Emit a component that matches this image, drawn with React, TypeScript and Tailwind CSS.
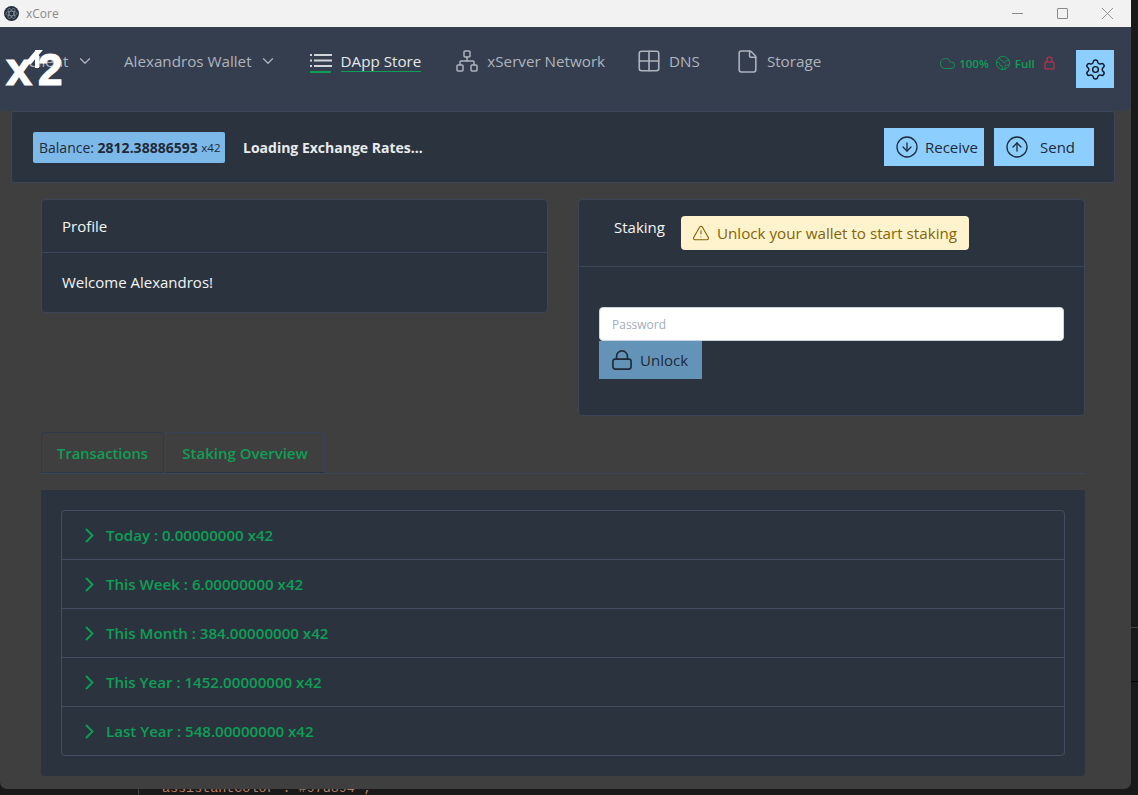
import React from "react";
import { ChevronDown, CircleArrowDown, CircleArrowUp, Cloud, Earth, File, Grid2x2, Network, Settings, TriangleAlert } from "lucide-react";

const rows = [
  "Today : 0.00000000 x42",
  "This Week : 6.00000000 x42",
  "This Month : 384.00000000 x42",
  "This Year : 1452.00000000 x42",
  "Last Year : 548.00000000 x42",
];

function AppIcon() {
  return (
    <svg width="15" height="15" viewBox="0 0 16 16" fill="none" stroke="#8fa0ad" strokeWidth="0.7">
      <circle cx="8" cy="8" r="8" fill="#27303a" stroke="none" />
      <ellipse cx="8" cy="8" rx="6" ry="2.4" />
      <ellipse cx="8" cy="8" rx="6" ry="2.4" transform="rotate(60 8 8)" />
      <ellipse cx="8" cy="8" rx="6" ry="2.4" transform="rotate(120 8 8)" />
    </svg>
  );
}

function ListIcon() {
  return (
    <svg width="24" height="22" viewBox="0 0 24 22" fill="none" strokeWidth="2">
      <path d="M5 3h18M5 8.500h18M5 14h18M1 3h2M1 8.500h2M1 14h2" stroke="#d1d5db" />
      <path d="M1 20h21" stroke="#0d9f55" />
    </svg>
  );
}

function PadLock({ size, color }: { size: number; color: string }) {
  return (
    <svg width={size} height={size} viewBox="0 0 22 22" fill="none" stroke={color} strokeWidth="1.800">
      <rect x="1" y="10" width="20" height="11" rx="2.500" />
      <path d="M5 10V7a6 6 0 0 1 12 0v3" />
    </svg>
  );
}

function WinControls() {
  return (
    <div className="flex items-center gap-[34px] pr-[18px]">
      <div className="h-px w-[11px] bg-[#8a8a8a]" />
      <div className="h-[11px] w-[11px] rounded-[1px] border border-[#8a8a8a]" />
      <svg width="11" height="11" viewBox="0 0 11 11" stroke="#8a8a8a" strokeWidth="0.9"><path d="M0 0l11 11M11 0L0 11" /></svg>
    </div>
  );
}

function NavItem({ icon, label, className, labelClass }: { icon?: React.ReactNode; label: string; className: string; labelClass?: string }) {
  return (
    <div className={"flex items-center " + className}>
      {icon}
      <span className={labelClass ?? "text-[#aeb4bd]"}>{label}</span>
    </div>
  );
}

function PrimaryButton({ icon, label }: { icon: React.ReactNode; label: string }) {
  return (
    <button className="flex h-[38px] w-[100px] items-center bg-[#8ccfff] text-[15px] text-[#1f2937]">
      {icon}
      <span>{label}</span>
    </button>
  );
}

function Logo() {
  return (
    <div className="absolute left-[6px] top-[20px] h-[40px] w-[58px] text-white [-webkit-text-stroke:1.200px_white]" style={{ fontFamily: '"Liberation Sans", sans-serif' }}>
      <div className="absolute left-[24px] top-[3px] h-[14px] w-[7px] skew-x-[-40deg] bg-white" />
      <div className="absolute left-[29px] top-[3px] h-[18px] w-[4px] bg-white" />
      <div className="flex items-baseline font-bold leading-[44px]">
        <span className="w-[32px] text-[47px]">x</span>
        <span className="text-[44px]">2</span>
      </div>
    </div>
  );
}

export default function App() {
  return (
    <div className="relative h-[795px] w-[1138px] overflow-hidden bg-[#191919]" style={{ fontFamily: '"Open Sans", "Noto Sans", sans-serif' }}>
      <div className="absolute left-[162px] top-[779px] font-mono text-[13.400px] text-[#b5816a]">assistantColor : #97d894 ;</div>
      <div className="absolute left-[138px] top-[788px] h-[7px] w-px bg-[#444]" />
      <div className="absolute right-0 top-[627px] h-px w-[7px] bg-[#444]" />
      <div className="absolute right-0 top-[681px] h-px w-[7px] bg-black" />

      <div className="relative h-[789px] w-[1131px] overflow-hidden rounded-b-[7px] bg-[#3f3f3f]">
        <div className="flex h-[27px] items-center justify-between bg-[#f2f2f2]">
          <div className="flex items-center gap-[7px] pl-[4px] text-[12px] text-[#8a8a8a]">
            <AppIcon />
            <span>xCore</span>
          </div>
          <WinControls />
        </div>

        <nav className="relative flex h-[84px] items-center rounded-br-[6px] bg-[#343e4e] pl-[28px] text-[15.200px]">
          <div className="mb-[16px] flex items-center">
            <NavItem label="Client" className="w-[48px]" />
            <ChevronDown className="mr-[30px] text-[#aeb4bd]" size={18} strokeWidth={1.7} />
            <NavItem label="Alexandros Wallet" className="" />
            <ChevronDown className="ml-[7px] text-[#aeb4bd]" size={18} strokeWidth={1.7} />
            <NavItem icon={<span className="mr-[8px] mt-[3px]"><ListIcon /></span>} label="DApp Store" className="ml-[32px]" labelClass="mt-[1px] border-b border-[#0d9f55] leading-[19px] text-[#e5e7eb]" />
            <NavItem icon={<Network className="mr-[8px]" size={24} strokeWidth={1.5} />} label="xServer Network" className="ml-[34px] text-[#aeb4bd]" />
            <NavItem icon={<Grid2x2 className="mr-[7px]" size={26} strokeWidth={1.5} />} label="DNS" className="ml-[31px] text-[#aeb4bd]" />
            <NavItem icon={<File className="mr-[7px]" size={25} strokeWidth={1.5} />} label="Storage" className="ml-[35px] text-[#aeb4bd]" />
          </div>
          <div className="mb-[12px] ml-[118px] flex items-center text-[11.500px] font-semibold text-[#0d9f55]">
            <Cloud size={17} strokeWidth={1.2} className="mr-[3px]" />
            <span className="pt-[2px]">100%</span>
            <Earth size={16} strokeWidth={1.2} className="ml-[6px] mr-[4px]" />
            <span className="pt-[2px]">Full</span>
            <svg width="13" height="14" viewBox="0 0 13 14" fill="none" stroke="#d12d45" strokeWidth="1.100" className="ml-[8px]">
              <rect x="2" y="6" width="9" height="7" rx="1" />
              <path d="M4 6V3.500a2.500 2.500 0 0 1 5 0V6" />
            </svg>
          </div>
          <button className="absolute left-[1076px] top-[23px] flex h-[38px] w-[38px] items-center justify-center bg-[#8ccfff] text-[#111827]">
            <Settings size={23} strokeWidth={1.5} />
          </button>
          <Logo />
        </nav>

        <section className="ml-[11px] flex h-[72px] w-[1104px] items-center rounded-[3px] border border-[#3b4759] bg-[#2b343e] pl-[21px] pr-[20px]">
          <div className="flex h-[31px] w-[192px] items-center rounded-[2px] bg-[#7cb9e8] pl-[6px] pt-[1px] text-[14px] text-[#1f2937]">
            Balance:&nbsp;<b>2812.38886593</b>&nbsp;<span className="text-[11.500px]">x42</span>
          </div>
          <div className="ml-[18px] pt-[1px] text-[14px] font-bold text-[#e8eaed]">Loading Exchange Rates...</div>
          <div className="ml-auto flex gap-[10px]">
            <PrimaryButton icon={<CircleArrowDown className="ml-[11px] mr-[6px]" size={24} strokeWidth={1.3} />} label="Receive" />
            <PrimaryButton icon={<CircleArrowUp className="ml-[11px] mr-[11px]" size={24} strokeWidth={1.3} />} label="Send" />
          </div>
        </section>

        <div className="ml-[41px] mt-[16px] flex h-[217px] w-[1044px] items-start gap-[30px]">
          <div className="h-[114px] w-[507px] rounded-[4px] border border-[#3b4759] bg-[#2b343e] text-[15px] text-[#f3f4f6]">
            <div className="flex h-[53px] items-center border-b border-[#3b4759] pl-[20px]">Profile</div>
            <div className="flex h-[59px] items-center pl-[20px]">Welcome Alexandros!</div>
          </div>
          <div className="h-[217px] w-[507px] rounded-[4px] border border-[#3b4759] bg-[#2b343e]">
            <div className="flex h-[67px] border-b border-[#3b4759] pl-[35px]">
              <span className="mt-[17px] text-[15px] leading-[20px] text-[#f3f4f6]">Staking</span>
              <div className="ml-[16px] mt-[16px] flex h-[34px] w-[288px] items-center rounded-[4px] bg-[#fff3cd] pl-[11px] text-[15.200px] text-[#856404]">
                <TriangleAlert size={18} strokeWidth={1.5} className="mr-[7px]" />
                Unlock your wallet to start staking
              </div>
            </div>
            <div className="pl-[20px] pt-[40px]">
              <input readOnly placeholder="Password" className="block h-[34px] w-[465px] rounded-[4px] border border-[#cbd5e0] bg-white pl-[12px] text-[12px] placeholder:text-[#a0aec0]" />
              <button className="flex h-[38px] w-[103px] items-center bg-[#6394b8] pl-[13px] text-[15px] text-[#1f2937]">
                <span className="mr-[8px]"><PadLock size={20} color="#1f2937" /></span>
                Unlock
              </button>
            </div>
          </div>
        </div>

        <div className="ml-[41px] mt-[16px] flex h-[42px] w-[1044px] items-end gap-px border-b border-[#3b4759] text-[15px] font-semibold text-[#0d9f55]">
          <div className="flex h-[41px] w-[123px] items-center justify-center rounded-t-[4px] border border-[#2f3a49] pt-[2px] text-[14.700px]">Transactions</div>
          <div className="flex h-[41px] w-[160px] items-center justify-center rounded-t-[4px] border border-[#36435a] border-b-[#2b343e] pt-[2px]">Staking Overview</div>
        </div>

        <div className="ml-[41px] mt-[16px] h-[286px] w-[1044px] rounded-b-[3px] bg-[#2b343e] p-[20px]">
          <div className="rounded-[4px] border border-[#434e60]">
            {rows.map((r, i) => (
              <div key={r} className={i ? "flex h-[49px] items-center border-t border-[#434e60] pl-[23px] text-[15.100px] font-semibold text-[#0d9f55]" : "flex h-[48px] items-center pl-[23px] text-[15.100px] font-semibold text-[#0d9f55]"}>
                <svg width="9" height="15" viewBox="0 0 9 15" fill="none" stroke="currentColor" strokeWidth="1.800" className="mr-[12px]">
                  <path d="M1 1l6.500 6.500L1 14" />
                </svg>
                {r}
              </div>
            ))}
          </div>
        </div>
      </div>
    </div>
  );
}
